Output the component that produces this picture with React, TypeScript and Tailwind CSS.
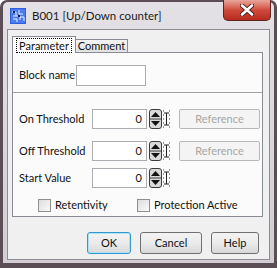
import React from "react";

// Win7-style "Up/Down counter" block properties dialog

function Spinner() {
  return (
    <svg width="13" height="20" viewBox="0 0 13 20" className="shrink-0">
      <rect x="0.5" y="0.5" width="12" height="19" rx="2.5" fill="#d9d9d9" stroke="#3c3c3c" />
      <line x1="1" y1="10" x2="12" y2="10" stroke="#3c3c3c" />
      <path d="M2 8 L6.5 3 L11 8 Z" fill="#111" />
      <path d="M2 12 L6.5 17 L11 12 Z" fill="#111" />
    </svg>
  );
}

function IBracket() {
  return (
    <svg width="7" height="20" viewBox="0 0 7 20" className="shrink-0">
      <path d="M1 4 H6 M3.5 4 V16 M1 16 H6" stroke="#222" strokeWidth="1" fill="none" />
      <path d="M0.5 1 V19 M6.5 1 V19" stroke="#9a9a9a" strokeWidth="1" strokeDasharray="2 2" fill="none" />
    </svg>
  );
}

function NumField({ label, reference, className }: { label: string; reference?: boolean; className?: string }) {
  return (
    <div className={"flex items-center h-[20px] " + (className ?? "")}>
      <span className="w-[73px] whitespace-nowrap">{label}</span>
      <div className="w-[55px] h-[20px] border border-[#abadb3] bg-white text-right pr-[4px] leading-[18px]">0</div>
      <div className="ml-[2px] flex items-center gap-[1px]">
        <Spinner />
        <IBracket />
      </div>
      {reference && (
        <div className="ml-[9px] w-[81px] h-[20px] border border-[#b5b9bc] rounded-[2px] bg-[#f4f4f4] text-[#a7a7a7] flex items-center justify-center">
          Reference
        </div>
      )}
    </div>
  );
}

function Check({ label }: { label: string }) {
  return (
    <div className="flex items-center gap-[4px] whitespace-nowrap">
      <div className="w-[13px] h-[13px] border border-[#8e8f8f] bg-gradient-to-br from-[#dcdcdc] to-[#fafafa] p-[2px]">
        <div className="w-full h-full bg-gradient-to-br from-[#e2e2e2] to-[#f6f6f6]" />
      </div>
      <span>{label}</span>
    </div>
  );
}

function Btn({ label, w, def }: { label: string; w: string; def?: boolean }) {
  return (
    <div
      className={
        "h-[22px] rounded-[3px] border flex items-center justify-center bg-gradient-to-b from-[#f3f3f3] via-[#ebebeb] to-[#d8d8d8] " +
        w +
        (def ? " border-[#3399cc] shadow-[inset_0_0_0_1px_#a8e4f4]" : " border-[#707070]")
      }
    >
      {label}
    </div>
  );
}

export default function App() {
  return (
    <div
      className="relative w-[277px] h-[268px] bg-[#5b4e55] rounded-t-[7px] px-[3px] pt-[2px] pb-[5px] text-[11px] text-[#111]"
      style={{ fontFamily: 'Lato, "Liberation Sans", sans-serif' }}
    >
      <div className="h-full rounded-t-[5px] bg-gradient-to-b from-[#e4e1e6] to-[#d2ced4] flex flex-col px-[4px] pb-[3px]">
        {/* title bar */}
        <div className="h-[27px] flex items-center pl-[3px] gap-[6px] shrink-0">
          <svg width="16" height="16" viewBox="0 0 16 16">
            <rect width="16" height="16" fill="#2f5fe0" />
            <rect x="1" y="1" width="14" height="14" fill="#4a7cf0" />
            <path d="M2 4 H6 V8 H3 M9 2 V6 H13 M10 9 H14 V13 M3 11 H7 V14 M6 8 H10 V12" stroke="#e8f0ff" strokeWidth="1" fill="none" />
            <rect x="8" y="7" width="2" height="2" fill="#0a1a60" />
            <rect x="3" y="3" width="2" height="2" fill="#0a1a60" />
          </svg>
          <span className="text-[11.5px] text-[#1b1b1b]">B001 [Up/Down counter]</span>
        </div>

        {/* client area */}
        <div className="flex-1 border border-[#8f8b92] bg-[#f0f0f0] flex flex-col pl-[4px] pr-[6px]">
          {/* tabs */}
          <div className="mt-[6px] flex items-end h-[16px]">
            <div className="relative z-10 h-[17px] -mb-[1px] w-[64px] border border-b-0 border-[#898c95] bg-[#fcfcfc] flex items-center justify-center">
              <span className="border border-dotted border-black px-[2px] leading-[13px]">Parameter</span>
            </div>
            <div className="h-[13px] w-[52px] border border-l-0 border-b-0 border-[#898c95] bg-gradient-to-b from-[#f3f3f3] to-[#e2e2e2] flex items-center justify-center leading-[12px]">
              Comment
            </div>
          </div>

          {/* tab panel */}
          <div className="border border-[#898c95] bg-[#fbfbfb] h-[165px] flex flex-col">
            <div className="mt-[12px] ml-[6px] flex items-center h-[21px]">
              <span className="w-[57px] whitespace-nowrap">Block name</span>
              <div className="w-[70px] h-[21px] border border-[#abadb3] bg-white" />
            </div>
            <div className="mt-[6px] h-[1px] bg-[#a0a0a0] border-b border-white box-content" />
            <div className="ml-[6px] flex flex-col">
              <NumField label="On Threshold" reference className="mt-[15px]" />
              <NumField label="Off Threshold" reference className="mt-[12px]" />
              <NumField label="Start Value" className="mt-[7px]" />
            </div>
            <div className="mt-[9px] flex items-center">
              <div className="ml-[25px] w-[99px]">
                <Check label="Retentivity" />
              </div>
              <Check label="Protection Active" />
            </div>
          </div>

          {/* buttons */}
          <div className="mt-[15px] flex justify-end gap-[9px] pr-[4px]">
            <Btn label="OK" w="w-[44px]" def />
            <Btn label="Cancel" w="w-[62px]" />
            <Btn label="Help" w="w-[48px]" />
          </div>
        </div>
      </div>

      {/* close button */}
      <div className="absolute top-0 right-[6px] w-[48px] h-[21px] rounded-b-[5px] border border-t-0 border-[#5e2520] bg-gradient-to-b from-[#e8a69c] via-[#d04a3c] to-[#b72a1e] flex items-center justify-center">
        <svg width="14" height="12" viewBox="0 0 14 12">
          <path d="M2 1.5 L12 10.5 M12 1.5 L2 10.5" stroke="#4a1d1a" strokeWidth="4.4" strokeLinecap="round" />
          <path d="M2 1.5 L12 10.5 M12 1.5 L2 10.5" stroke="#fff" strokeWidth="2.6" strokeLinecap="round" />
        </svg>
      </div>
    </div>
  );
}
